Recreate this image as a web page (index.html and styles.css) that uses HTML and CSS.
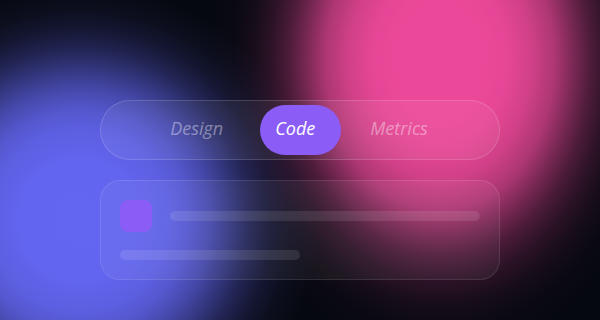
FILE: index.html
```html
<!DOCTYPE html>
<html>
<head>
<meta charset="utf-8">
<link rel="stylesheet" href="styles.css">
</head>
<body>
<main class="stage">
  <nav class="tabs">
    <span class="tab">Design</span>
    <span class="tab active">Code</span>
    <span class="tab last">Metrics</span>
  </nav>
  <section class="card">
    <div class="row">
      <div class="avatar"></div>
      <div class="line long"></div>
    </div>
    <div class="line short"></div>
  </section>
</main>
</body>
</html>
```
FILE: styles.css
```css
html, body {
  margin: 0;
  padding: 0;
  width: 600px;
  height: 320px;
  overflow: hidden;
}
body {
  font-family: "Open Sans", "Noto Sans", sans-serif;
  background-color: #06080f;
  background-image:
    radial-gradient(circle 240px at 80px 220px, rgba(99,102,241,1) 0%, rgba(99,102,241,0.99) 25%, rgba(99,102,241,0.93) 37.5%, rgba(99,102,241,0.84) 45.8%, rgba(99,102,241,0.69) 54.2%, rgba(99,102,241,0.5) 62.5%, rgba(99,102,241,0.31) 70.8%, rgba(99,102,241,0.16) 79.2%, rgba(99,102,241,0.07) 87.5%, rgba(99,102,241,0.03) 93.75%, rgba(99,102,241,0) 100%),
    radial-gradient(ellipse 230px 300px at 440px 60px, rgba(236,72,153,1) 0%, rgba(236,72,153,1) 20%, rgba(236,72,153,0.97) 30%, rgba(236,72,153,0.88) 40%, rgba(236,72,153,0.72) 50%, rgba(236,72,153,0.5) 58%, rgba(236,72,153,0.3) 66%, rgba(236,72,153,0.16) 74%, rgba(236,72,153,0.07) 82%, rgba(236,72,153,0.02) 90%, rgba(236,72,153,0) 100%);
}
.stage {
  box-sizing: border-box;
  width: 600px;
  height: 320px;
  padding: 100px 100px 0;
  display: flex;
  flex-direction: column;
  gap: 20px;
}
.tabs {
  box-sizing: border-box;
  height: 60px;
  border-radius: 30px;
  border: 1px solid rgba(255,255,255,0.15);
  background: rgba(255,255,255,0.06);
  display: flex;
  align-items: center;
  justify-content: center;
}
.tab {
  position: relative;
  height: 50px;
  padding: 0 26px 4px;
  box-sizing: border-box;
  display: flex;
  align-items: center;
  font-size: 18px;
  font-style: italic;
  color: rgba(255,255,255,0.4);
}
.tab.last {
  padding-left: 29px;
  padding-right: 28px;
}
.tab.active {
  color: #ffffff;
  z-index: 0;
}
.tab.active::before {
  content: "";
  position: absolute;
  top: 0;
  left: 11px;
  width: 81px;
  height: 50px;
  border-radius: 25px;
  background: #8b5cf6;
  z-index: -1;
}
.card {
  box-sizing: border-box;
  height: 100px;
  border-radius: 20px;
  border: 1px solid rgba(255,255,255,0.1);
  background: rgba(255,255,255,0.05);
  padding: 19px;
  display: flex;
  flex-direction: column;
  gap: 18px;
}
.row {
  display: flex;
  align-items: center;
  gap: 18px;
}
.avatar {
  width: 32px;
  height: 32px;
  border-radius: 8px;
  background: #8b5cf6;
}
.line {
  height: 10px;
  border-radius: 5px;
  background: rgba(255,255,255,0.1);
}
.line.long { flex: 1; }
.line.short { width: 180px; }
```
